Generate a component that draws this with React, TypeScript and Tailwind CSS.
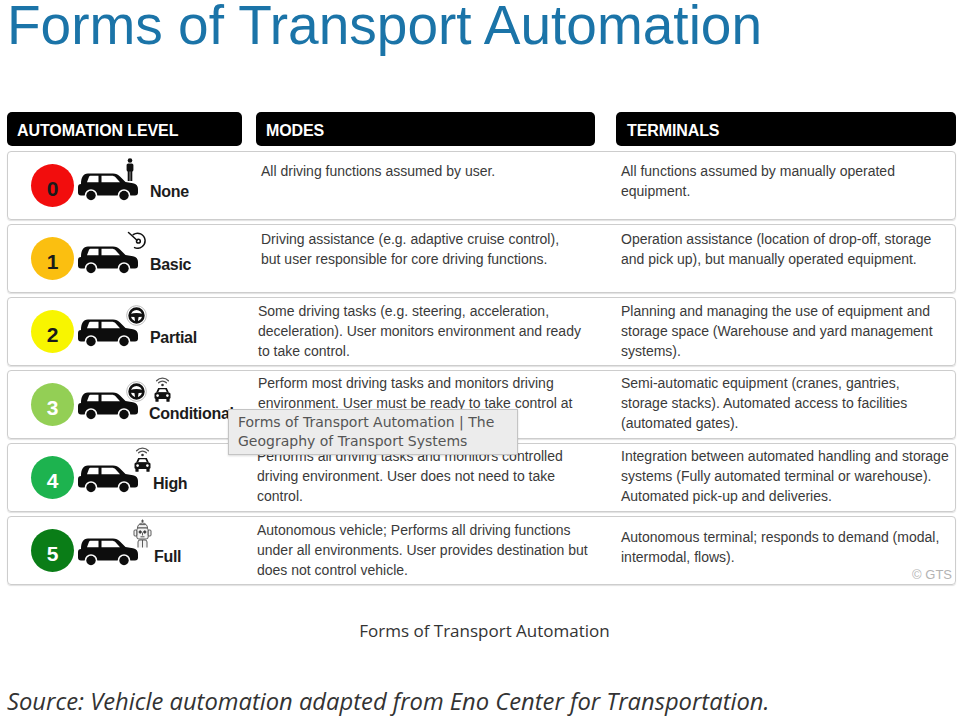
import React from "react";

type Level = {
  n: string;
  circle: string;
  label: string;
  labelClass: string;
  acc: "person" | "gauge" | "wheel" | "wheelcar" | "car" | "robot";
  modes: string[];
  terms: string[];
  modesClass: string;
  termsClass: string;
};

const levels: Level[] = [
  {
    n: "0",
    circle: "bg-[#f20d0d] text-[#1a1a1a]",
    label: "None",
    labelClass: "ml-[12px]",
    acc: "person",
    modes: ["All driving functions assumed by user."],
    terms: ["All functions assumed by manually operated", "equipment."],
    modesClass: "pt-[9px] pl-[5px]",
    termsClass: "pt-[9px]",
  },
  {
    n: "1",
    circle: "bg-[#fbbf10] text-[#1a1a1a]",
    label: "Basic",
    labelClass: "ml-[12px]",
    acc: "gauge",
    modes: [
      "Driving assistance (e.g. adaptive cruise control),",
      "but user responsible for core driving functions.",
    ],
    terms: [
      "Operation assistance (location of drop-off, storage",
      "and pick up), but manually operated equipment.",
    ],
    modesClass: "pt-[4px] pl-[5px]",
    termsClass: "pt-[4px]",
  },
  {
    n: "2",
    circle: "bg-[#f8f500] text-[#1a1a1a]",
    label: "Partial",
    labelClass: "ml-[12px]",
    acc: "wheel",
    modes: [
      "Some driving tasks (e.g. steering, acceleration,",
      "deceleration). User monitors environment and ready",
      "to take control.",
    ],
    terms: [
      "Planning and managing the use of equipment and",
      "storage space (Warehouse and yard management",
      "systems).",
    ],
    modesClass: "pt-[3px] pl-[2px]",
    termsClass: "pt-[3px]",
  },
  {
    n: "3",
    circle: "bg-[#93cf55] text-white",
    label: "Conditional",
    labelClass: "ml-[11px] mt-[33px]",
    acc: "wheelcar",
    modes: [
      "Perform most driving tasks and monitors driving",
      "environment. User must be ready to take control at",
      "all times.",
    ],
    terms: [
      "Semi-automatic equipment (cranes, gantries,",
      "storage stacks). Automated access to facilities",
      "(automated gates).",
    ],
    modesClass: "pt-[2px] pl-[2px]",
    termsClass: "pt-[2px]",
  },
  {
    n: "4",
    circle: "bg-[#1db34f] text-white",
    label: "High",
    labelClass: "ml-[15px]",
    acc: "car",
    modes: [
      "Performs all driving tasks and monitors controlled",
      "driving environment. User does not need to take",
      "control.",
    ],
    terms: [
      "Integration between automated handling and storage",
      "systems (Fully automated terminal or warehouse).",
      "Automated pick-up and deliveries.",
    ],
    modesClass: "pt-[2px] pl-[1px]",
    termsClass: "pt-[2px]",
  },
  {
    n: "5",
    circle: "bg-[#0a7d17] text-white",
    label: "Full",
    labelClass: "ml-[16px]",
    acc: "robot",
    modes: [
      "Autonomous vehicle; Performs all driving functions",
      "under all environments. User provides destination but",
      "does not control vehicle.",
    ],
    terms: ["Autonomous terminal; responds to demand (modal,", "intermodal, flows)."],
    modesClass: "pt-[3px] pl-[1px]",
    termsClass: "pt-[10px]",
  },
];

function Car() {
  return (
    <svg width="60" height="30" viewBox="0 0 60 30" className="block">
      <path
        d="M3 12C3 6 5 1.5 10 1.5L35 1.5C38 1.5 40 2.5 42 4.5L47.5 10L55 11.2C58.5 11.8 60 14 60 17L60 20.5C60 22.5 59 23.5 57 23.5L3 23.5C1 23.5 0 22.5 0 20.5L0 15C0 13 1 12 3 12Z"
        fill="#0d0d0d"
      />
      <path d="M9 10.2L11 4.8C11.5 4 12 3.8 13 3.8L20.5 3.8L20.5 10.2Z" fill="#fff" />
      <path d="M23.5 3.8L33.5 3.8C35.5 3.8 36.5 4.3 37.5 5.3L42 10.2L23.5 10.2Z" fill="#fff" />
      <circle cx="13" cy="23.5" r="6.3" fill="#fff" />
      <circle cx="13" cy="23.5" r="4.7" fill="#0d0d0d" />
      <circle cx="46" cy="23.5" r="6.3" fill="#fff" />
      <circle cx="46" cy="23.5" r="4.7" fill="#0d0d0d" />
    </svg>
  );
}

function Person() {
  return (
    <svg width="10" height="24" viewBox="0 0 10 24">
      <circle cx="5" cy="2.5" r="2.3" fill="#111" />
      <rect x="1.6" y="5.4" width="6.8" height="8.2" rx="1.6" fill="#111" />
      <rect x="2.7" y="12" width="2" height="11" fill="#111" />
      <rect x="5.3" y="12" width="2" height="11" fill="#111" />
    </svg>
  );
}

function Gauge() {
  return (
    <svg width="22" height="18" viewBox="0 0 22 18" fill="none" stroke="#111" strokeWidth="1.5">
      <path d="M7.2 3.6A7.5 7.5 0 1 1 8.6 16.6" strokeLinecap="round" />
      <path d="M2.5 1.5L11 9.2" strokeLinecap="round" />
      <circle cx="12.4" cy="10.2" r="1.9" />
    </svg>
  );
}

function Wheel() {
  return (
    <svg width="21" height="21" viewBox="0 0 22 22">
      <circle cx="11" cy="11" r="10.3" fill="#fff" stroke="#b8b8b8" strokeWidth="1" />
      <circle cx="11" cy="11" r="7.2" fill="none" stroke="#111" strokeWidth="2.8" />
      <path d="M4.3 9.4Q11 7.4 17.7 9.4L17.7 12.4L13.2 12.6L12.3 17.8L9.7 17.8L8.8 12.6L4.3 12.4Z" fill="#111" />
    </svg>
  );
}

function SignalCar() {
  return (
    <svg width="19" height="26" viewBox="0 0 19 26">
      <g fill="none" stroke="#555" strokeWidth="1.3" strokeLinecap="round">
        <path d="M3.6 4.8A8 8 0 0 1 15.4 4.8" />
        <path d="M5.6 6.8A5.2 5.2 0 0 1 13.4 6.8" />
      </g>
      <circle cx="9.5" cy="9" r="1.3" fill="#333" />
      <path d="M5.2 12L13.8 12L16 16.8L3 16.8Z" fill="#111" />
      <path d="M6.6 13.3L12.4 13.3L13.7 16L5.3 16Z" fill="#fff" />
      <rect x="1.5" y="16.5" width="16" height="6.5" rx="1.6" fill="#111" />
      <circle cx="4.6" cy="19.6" r="1.3" fill="#fff" />
      <circle cx="14.4" cy="19.6" r="1.3" fill="#fff" />
      <rect x="2.4" y="22.5" width="3.2" height="3.3" rx="0.6" fill="#111" />
      <rect x="13.4" y="22.5" width="3.2" height="3.3" rx="0.6" fill="#111" />
    </svg>
  );
}

function Robot() {
  return (
    <svg width="21" height="29" viewBox="0 0 21 29" fill="#f2f2f2" stroke="#4a4a4a" strokeWidth="0.9">
      <path d="M10.5 0.5L10.5 3.5M9 2L12 2" fill="none" />
      <path d="M5.5 9A5 5 0 0 1 15.5 9Z" />
      <path d="M7.5 5.6L13.5 5.6" fill="none" />
      <rect x="4.8" y="9" width="11.4" height="11" rx="2" />
      <rect x="2" y="11" width="2.8" height="6" rx="1" />
      <rect x="16.2" y="11" width="2.8" height="6" rx="1" />
      <circle cx="8.2" cy="13" r="1.2" fill="#333" />
      <circle cx="12.8" cy="13" r="1.2" fill="#333" />
      <path d="M10.5 13.5L10.5 16.5M8.5 17.8L12.5 17.8" fill="none" />
      <path d="M6 28.5L6 23Q6 21 8 21L13 21Q15 21 15 23L15 28.5" />
      <path d="M10.5 21L10.5 28.5" fill="none" />
    </svg>
  );
}

function Accessory({ kind }: { kind: Level["acc"] }) {
  if (kind === "person") {
    return (
      <div className="absolute left-[47px] top-[-14px]">
        <Person />
      </div>
    );
  }
  if (kind === "gauge") {
    return (
      <div className="absolute left-[48px] top-[-14px]">
        <Gauge />
      </div>
    );
  }
  if (kind === "wheel") {
    return (
      <div className="absolute left-[48px] top-[-13px]">
        <Wheel />
      </div>
    );
  }
  if (kind === "wheelcar") {
    return (
      <>
        <div className="absolute left-[48px] top-[-10px]">
          <Wheel />
        </div>
        <div className="absolute left-[75px] top-[-15px]">
          <SignalCar />
        </div>
      </>
    );
  }
  if (kind === "car") {
    return (
      <div className="absolute left-[55px] top-[-18px]">
        <SignalCar />
      </div>
    );
  }
  return (
    <div className="absolute left-[54px] top-[-18px]">
      <Robot />
    </div>
  );
}

function HeaderBar({ className, children }: { className: string; children: React.ReactNode }) {
  return (
    <div
      className={`flex h-[34px] items-center rounded-[5px] bg-black pt-[3px] text-[16px] font-bold tracking-[-0.1px] text-white ${className}`}
    >
      {children}
    </div>
  );
}

function Lines({ lines }: { lines: string[] }) {
  return (
    <>
      {lines.map((line) => (
        <span key={line} className="block whitespace-nowrap">
          {line}
        </span>
      ))}
    </>
  );
}

export default function App() {
  return (
    <div className="relative h-[718px] w-[975px] overflow-hidden bg-white font-['Liberation_Sans',Arial,sans-serif]">
      <h1 className="-mt-[2px] pl-[7px] text-[55px] leading-[54px] font-normal text-[#1b74a8]">
        Forms of Transport Automation
      </h1>

      <div className="ml-[7px] mt-[60px] w-[949px]">
        <div className="flex">
          <HeaderBar className="w-[235px] pl-[10px]">AUTOMATION LEVEL</HeaderBar>
          <HeaderBar className="ml-[14px] w-[339px] pl-[10px]">MODES</HeaderBar>
          <HeaderBar className="ml-[21px] w-[340px] pl-[11px]">TERMINALS</HeaderBar>
        </div>

        <div className="mt-[5px] flex flex-col gap-[4px]">
          {levels.map((lv) => (
            <div
              key={lv.n}
              className="relative grid h-[69px] grid-cols-[234px_14px_339px_21px_339px] rounded-[4px] border border-[#cdcdcd] shadow-[0_1px_1px_rgba(0,0,0,0.12)]"
            >
              <div className="flex items-start pl-[23px]">
                <div
                  className={`mt-[12px] flex h-[43px] w-[43px] shrink-0 items-center justify-center rounded-full pt-[5px] text-[21px] leading-none font-bold ${lv.circle}`}
                >
                  {lv.n}
                </div>
                <div className="relative ml-[4px] mt-[20px] h-[30px] w-[60px] shrink-0">
                  <Car />
                  <Accessory kind={lv.acc} />
                </div>
                <div
                  className={`mt-[30px] whitespace-nowrap text-[16px] leading-[20px] font-bold tracking-[-0.3px] text-[#1c1c1c] ${lv.labelClass}`}
                >
                  {lv.label}
                </div>
              </div>
              <div />
              <div className={`text-[14px] leading-[20px] text-[#3a3a3a] ${lv.modesClass}`}>
                <Lines lines={lv.modes} />
              </div>
              <div />
              <div className={`pl-[5px] text-[14px] leading-[20px] text-[#3a3a3a] ${lv.termsClass}`}>
                <Lines lines={lv.terms} />
              </div>
              {lv.n === "5" && (
                <span className="absolute bottom-[1px] right-[3px] text-[13px] leading-[16px] text-[#b3b3b3]">
                  © GTS
                </span>
              )}
            </div>
          ))}
        </div>
      </div>

      <p className="mt-[34px] pr-[6px] text-center font-['Open_Sans',sans-serif] text-[17px] leading-[24px] text-[#333]">
        Forms of Transport Automation
      </p>

      <p className="mt-[42px] pl-[7px] font-['Open_Sans',sans-serif] text-[23.75px] leading-[32px] italic text-[#333]">
        Source: Vehicle automation adapted from Eno Center for Transportation.
      </p>

      <div className="absolute left-[228px] top-[409px] h-[46px] w-[290px] border border-[#c4c4c4] bg-[#ececec] pl-[9px] pt-[3px] font-['DejaVu_Sans',sans-serif] text-[14px] leading-[19px] text-[#555] shadow-[0_1px_2px_rgba(0,0,0,0.15)]">
        Forms of Transport Automation | The
        <br />
        Geography of Transport Systems
      </div>
    </div>
  );
}
